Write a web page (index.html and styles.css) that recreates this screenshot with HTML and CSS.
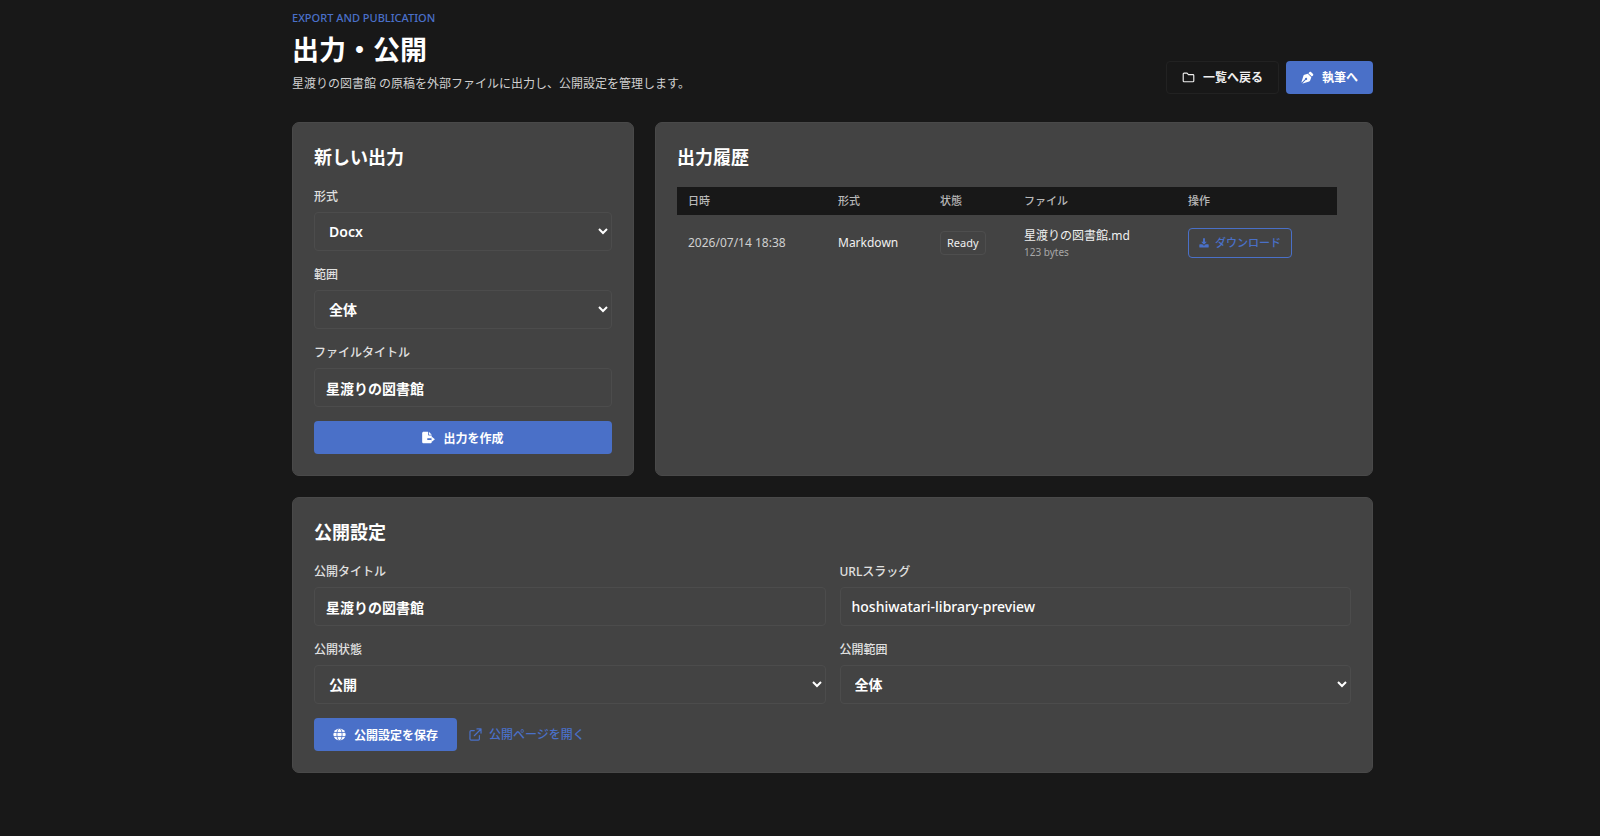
FILE: index.html
```html
<!DOCTYPE html>
<html lang="ja">
<head>
    <meta charset="UTF-8">
    <meta name="viewport" content="width=device-width, initial-scale=1.0">
    <title>出力・公開</title>
    <link rel="stylesheet" href="styles.css">
</head>
<body>
    <main class="container">
        <header class="page-header">
            <div>
                <p class="eyebrow">EXPORT AND PUBLICATION</p>
                <h1>出力・公開</h1>
                <p class="lead">星渡りの図書館 の原稿を外部ファイルに出力し、公開設定を管理します。</p>
            </div>
            <div class="header-actions">
                <a href="#" class="btn btn-dark">
                    <svg class="icon" viewBox="0 0 16 16" fill="none" stroke="currentColor" stroke-width="1.4" stroke-linejoin="round"><path d="M1.5 12.2V3.6c0-.6.4-1 1-1h3.7l1.7 1.8h5.6c.6 0 1 .4 1 1v6.8c0 .6-.4 1-1 1h-11c-.6 0-1-.4-1-1z"/></svg>
                    一覧へ戻る
                </a>
                <a href="#" class="btn btn-primary">
                    <svg class="icon" viewBox="0 0 16 16" fill="currentColor"><path d="M10.6 1.2c.5-.5 1.2-.5 1.7 0l2.5 2.5c.5.5.5 1.2 0 1.7l-1.5 1.5-4.2-4.2z"/><path d="M8.4 3.3l4.3 4.3-1.4 4.2c-.2.6-.6 1-1.2 1.2L2.2 15.4l-.4-.4 4-4c.9.3 1.8-.4 1.8-1.3 0-.8-.6-1.4-1.4-1.4-.9 0-1.6.9-1.3 1.8l-4 4-.4-.4L3 5.9c.2-.6.6-1 1.2-1.2z"/></svg>
                    執筆へ
                </a>
            </div>
        </header>

        <div class="panels">
            <section class="card">
                <h2>新しい出力</h2>
                <form class="form">
                    <div class="field">
                        <label for="format">形式</label>
                        <select id="format">
                            <option>Docx</option>
                            <option>Markdown</option>
                        </select>
                    </div>
                    <div class="field">
                        <label for="range">範囲</label>
                        <select id="range">
                            <option>全体</option>
                        </select>
                    </div>
                    <div class="field">
                        <label for="fileTitle">ファイルタイトル</label>
                        <input type="text" id="fileTitle" value="星渡りの図書館">
                    </div>
                    <button type="button" class="btn btn-primary">
                        <svg class="icon" viewBox="0 0 16 16" fill="currentColor"><path d="M2 .8h5.4v3.7c0 .6.4 1 1 1h3.6V9H6.5v2.2H12v2.2c0 1-.8 1.8-1.8 1.8H2c-1 0-1.8-.8-1.8-1.8V2.6C.2 1.6 1 .8 2 .8z"/><path d="M8.4.8l3.6 3.7H8.4z"/><path d="M11.7 6.8l4.2 3.3-4.2 3.3z"/></svg>
                        出力を作成
                    </button>
                </form>
            </section>

            <section class="card">
                <h2>出力履歴</h2>
                <div class="table-wrap">
                    <table class="history">
                        <thead>
                            <tr>
                                <th class="col-date">日時</th>
                                <th class="col-format">形式</th>
                                <th class="col-status">状態</th>
                                <th class="col-file">ファイル</th>
                                <th>操作</th>
                            </tr>
                        </thead>
                        <tbody>
                            <tr>
                                <td class="date">2026/07/14 18:38</td>
                                <td>Markdown</td>
                                <td><span class="badge">Ready</span></td>
                                <td>
                                    <div class="file-name">星渡りの図書館.md</div>
                                    <div class="file-size">123 bytes</div>
                                </td>
                                <td>
                                    <a href="#" class="btn btn-outline">
                                        <svg class="icon" viewBox="0 0 16 16" fill="currentColor"><path d="M6.5.5h3V6h3L8 10.8 3.500 6h3z"/><path d="M1.500 9.800h3.800L8 12.500l2.700-2.700h3.800c.6 0 1 .4 1 1v3.400c0 .6-.4 1-1 1h-13c-.6 0-1-.4-1-1v-3.400c0-.6.4-1 1-1z"/></svg>
                                        ダウンロード
                                    </a>
                                </td>
                            </tr>
                        </tbody>
                    </table>
                </div>
            </section>
        </div>

        <section class="card">
            <h2>公開設定</h2>
            <form class="form">
                <div class="field-grid">
                    <div class="field">
                        <label for="publicTitle">公開タイトル</label>
                        <input type="text" id="publicTitle" value="星渡りの図書館">
                    </div>
                    <div class="field">
                        <label for="slug">URLスラッグ</label>
                        <input type="text" id="slug" class="slug-input" value="hoshiwatari-library-preview">
                    </div>
                    <div class="field">
                        <label for="publicStatus">公開状態</label>
                        <select id="publicStatus">
                            <option>公開</option>
                            <option>非公開</option>
                        </select>
                    </div>
                    <div class="field">
                        <label for="publicRange">公開範囲</label>
                        <select id="publicRange">
                            <option>全体</option>
                        </select>
                    </div>
                </div>
                <div class="form-actions">
                    <button type="button" class="btn btn-primary btn-save">
                        <svg class="icon" viewBox="0 0 16 16"><circle cx="8" cy="8" r="7.5" fill="currentColor"/><path d="M0 5.5h16M0 10.5h16" stroke="#4a70c8" fill="none"/><ellipse cx="8" cy="8" rx="3.2" ry="7.5" stroke="#4a70c8" fill="none"/></svg>
                        公開設定を保存
                    </button>
                    <a href="#" class="public-link">
                        <svg class="icon" viewBox="0 0 16 16" fill="none" stroke="currentColor" stroke-width="1.5" stroke-linecap="round" stroke-linejoin="round"><path d="M6.5 3.2H2.6c-.8 0-1.4.6-1.4 1.4v8.8c0 .8.6 1.4 1.4 1.4h8.8c.8 0 1.4-.6 1.4-1.4V9.5M9.8 1.2h5v5M14.5 1.5l-8 8"/></svg>
                        公開ページを開く
                    </a>
                </div>
            </form>
        </section>
    </main>
</body>
</html>
```
FILE: styles.css
```css
* {
    margin: 0;
    padding: 0;
    box-sizing: border-box;
}

body {
    background-color: #181818;
    color: #f0f0f0;
    font-family: "Noto Sans", "Noto Sans CJK JP", sans-serif;
    font-size: 12px;
    line-height: 20px;
    padding: 10px 0 63px 65px;
}

.container {
    max-width: 1081px;
    margin: 0 auto;
}

.page-header {
    display: flex;
    justify-content: space-between;
    align-items: flex-end;
    margin-bottom: 28px;
}

.eyebrow {
    color: #4a70c8;
    font-size: 11px;
    font-weight: 500;
    line-height: 16px;
}

h1 {
    color: #fff;
    font-size: 27px;
    line-height: 36px;
    margin: 6px 0;
}

.lead {
    color: #d0d0d0;
}

.header-actions {
    display: flex;
    gap: 7px;
}

.btn {
    display: inline-flex;
    align-items: center;
    justify-content: center;
    gap: 8px;
    height: 33px;
    padding: 0 14px;
    border: 1px solid transparent;
    border-radius: 4px;
    font-family: inherit;
    font-size: 12px;
    font-weight: 600;
    text-decoration: none;
    white-space: nowrap;
    cursor: pointer;
}

.btn-primary {
    background-color: #4a70c8;
    color: #fff;
}

.btn-dark {
    padding: 0 15px;
    border-color: #222;
    color: #f0f0f0;
}

.btn-outline {
    height: 30px;
    padding: 0 10px;
    gap: 6px;
    border-color: #4a70c8;
    color: #4a70c8;
    font-size: 11px;
    font-weight: 500;
}

.btn-save {
    padding: 0 18px;
}

.icon {
    width: 13px;
    height: 13px;
    flex-shrink: 0;
}

.btn-outline .icon {
    width: 10px;
    height: 10px;
}

.panels {
    display: grid;
    grid-template-columns: 342px 1fr;
    gap: 21px;
    margin-bottom: 21px;
}

.card {
    min-width: 0;
    padding: 21px;
    background-color: #434343;
    border: 1px solid #494949;
    border-radius: 7px;
}

h2 {
    color: #fff;
    font-size: 18px;
    line-height: 27px;
    margin-bottom: 16px;
}

.form {
    display: flex;
    flex-direction: column;
    gap: 14px;
}

.field {
    display: flex;
    flex-direction: column;
    gap: 5px;
}

.field-grid {
    display: grid;
    grid-template-columns: 1fr 1fr;
    gap: 14px;
}

label {
    color: #e0e0e0;
    font-weight: 500;
}

input,
select {
    width: 100%;
    height: 39px;
    padding: 0 11px;
    background-color: #434343;
    border: 1px solid #4c4c4c;
    border-radius: 4px;
    color: #fff;
    font-family: inherit;
    font-size: 14px;
    font-weight: 600;
}

select {
    padding: 0 0 0 10px;
}

.slug-input {
    font-weight: 500;
}

.table-wrap {
    overflow-x: auto;
    padding-right: 14px;
}

.history {
    width: 100%;
    table-layout: fixed;
    border-collapse: collapse;
}

.history th {
    padding: 4px 11px;
    background-color: #181818;
    color: #b8b8b8;
    font-size: 11px;
    font-weight: 500;
    text-align: left;
}

.history td {
    padding: 12px 11px;
    vertical-align: middle;
    white-space: nowrap;
}

.col-date {
    width: 150px;
}

.col-format {
    width: 102px;
}

.col-status {
    width: 84px;
}

.col-file {
    width: 164px;
}

.history .date {
    color: #d0d0d0;
}

.badge {
    display: inline-block;
    padding: 1px 6px;
    border: 1px solid #4e4e4e;
    border-radius: 4px;
    font-size: 11px;
}

.file-name {
    line-height: 18px;
}

.file-size {
    color: #a8a8a8;
    font-size: 10px;
    line-height: 14px;
}

.form-actions {
    display: flex;
    align-items: center;
    gap: 12px;
}

.public-link {
    display: inline-flex;
    align-items: center;
    gap: 7px;
    color: #4a70c8;
    font-weight: 500;
    text-decoration: none;
}

@media (max-width: 900px) {
    body {
        padding-left: 0;
    }

    .panels,
    .field-grid {
        grid-template-columns: 1fr;
    }
}
```
